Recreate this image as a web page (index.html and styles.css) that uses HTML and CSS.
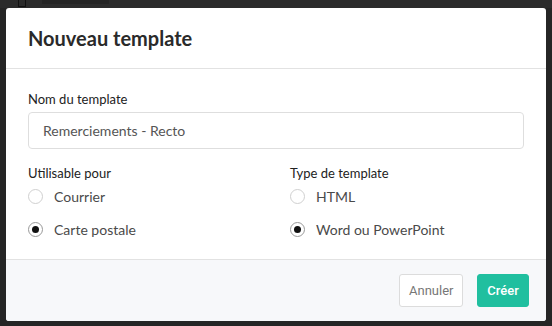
FILE: index.html
```html
<!DOCTYPE html>
<html lang="fr">
<head>
    <meta charset="UTF-8">
    <title>Nouveau template</title>
    <link rel="stylesheet" href="styles.css">
</head>
<body>
<div class="topbar">
    <span class="topbar-icon"></span>
    <span class="topbar-tab"></span>
</div>
<div class="modal">
    <div class="modal-header">Nouveau template</div>
    <div class="modal-body">
        <label class="field-label">Nom du template</label>
        <div class="text-input">Remerciements - Recto</div>

        <div class="options">
            <div class="option-group">
                <div class="field-label">Utilisable pour</div>
                <div class="radio-row"><span class="radio"></span>Courrier</div>
                <div class="radio-row"><span class="radio checked"></span>Carte postale</div>
            </div>
            <div class="option-group">
                <div class="field-label">Type de template</div>
                <div class="radio-row"><span class="radio"></span>HTML</div>
                <div class="radio-row"><span class="radio checked"></span>Word ou PowerPoint</div>
            </div>
        </div>
    </div>
    <div class="modal-footer">
        <button class="btn btn-cancel">Annuler</button>
        <button class="btn btn-create">Créer</button>
    </div>
</div>
</body>
</html>
```

FILE: styles.css
```css
body {
    margin: 0;
    padding: 0;
    background-color: #252525;
    font-family: Lato, "Open Sans", sans-serif;
    height: 326px;
    overflow: hidden;
}
.topbar {
    height: 8px;
    background-color: #2b2b2b;
    display: flex;
    align-items: flex-start;
    padding-left: 18px;
}
.topbar-icon {
    width: 6px;
    height: 6px;
    border: 1px solid #111;
    border-top: none;
    margin-right: 16px;
}
.topbar-tab {
    width: 67px;
    height: 4px;
    background-color: #242424;
}
.modal {
    margin-left: 6px;
    width: 540px;
    height: 313px;
    background-color: #fff;
    border-radius: 3px;
    overflow: hidden;
    display: flex;
    flex-direction: column;
}
.modal-header {
    height: 60px;
    display: flex;
    align-items: center;
    padding: 0 22px;
    font-size: 20px;
    font-weight: bold;
    color: #2a2a2a;
    border-bottom: 1px solid #e2e2e2;
}
.modal-body {
    padding: 21px 22px 20px 22px;
}
.field-label {
    display: block;
    font-size: 13px;
    line-height: 18px;
    color: #222;
    margin-bottom: 4px;
}
.text-input {
    height: 35px;
    line-height: 35px;
    border: 1px solid #dedede;
    border-radius: 4px;
    padding: 0 14px;
    font-size: 14px;
    color: #555;
}
.options {
    display: grid;
    grid-template-columns: 1fr 1fr;
    column-gap: 28px;
    margin-top: 15px;
}
.radio-row {
    display: flex;
    align-items: center;
    height: 20px;
    font-size: 14px;
    color: #4a4a4a;
}
.radio-row + .radio-row {
    margin-top: 13px;
}
.radio {
    width: 13px;
    height: 13px;
    border: 1px solid #d0d0d0;
    border-radius: 50%;
    margin-right: 11px;
    display: flex;
    align-items: center;
    justify-content: center;
    box-sizing: content-box;
}
.radio.checked {
    border-color: #999;
}
.radio.checked::after {
    content: "";
    width: 7px;
    height: 7px;
    border-radius: 50%;
    background-color: #111;
}
.modal-footer {
    flex: 1;
    background-color: #f7f8fa;
    border-top: 1px solid #e2e2e2;
    display: flex;
    justify-content: flex-end;
    align-items: flex-start;
    padding: 14px 17px 0 0;
    gap: 14px;
}
.btn {
    height: 33px;
    padding: 0 9px;
    border-radius: 3px;
    font-family: Roboto, sans-serif;
    font-size: 13px;
    cursor: pointer;
}
.btn-cancel {
    width: 64px;
    background-color: #fff;
    border: 1px solid #dcdcdc;
    color: #777;
}
.btn-create {
    width: 52px;
    background-color: #20bf9f;
    border: 1px solid #20bf9f;
    color: #fff;
    font-weight: 500;
}
```
